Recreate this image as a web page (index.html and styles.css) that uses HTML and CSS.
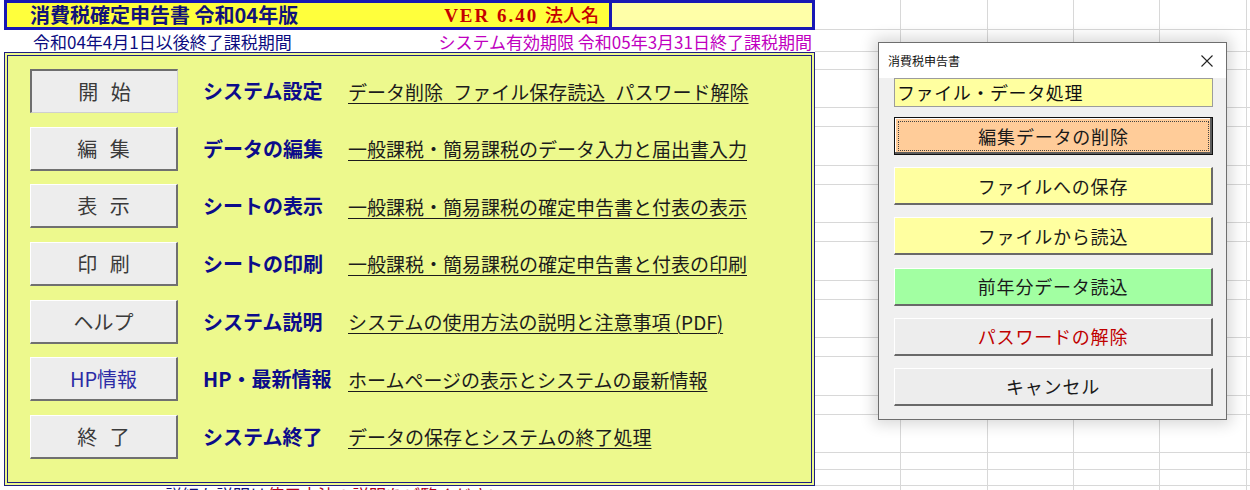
FILE: index.html
```html
<!DOCTYPE html>
<html lang="ja">
<head>
<meta charset="utf-8">
<title>消費税確定申告書</title>
<link rel="stylesheet" href="styles.css">
</head>
<body>
<div class="sheet">
  <div class="gutter"></div>
  <main class="main">
    <header class="title-row">
      <div class="title-cell">
        <span class="title">消費税確定申告書 令和04年版</span>
        <span class="version"><span class="ver-latin">VER 6.40 </span>法人名</span>
      </div>
      <div class="name-cell"></div>
    </header>
    <div class="sub-row">
      <span class="period">令和04年4月1日以後終了課税期間</span>
      <span class="expiry">システム有効期限 令和05年3月31日終了課税期間</span>
    </div>
    <section class="panel">
      <div class="menu">
        <button class="menu-btn pressed">開 始</button>
        <span class="menu-label">システム設定</span>
        <a class="menu-link spaced">データ削除 ファイル保存読込 パスワード解除</a>

        <button class="menu-btn">編 集</button>
        <span class="menu-label">データの編集</span>
        <a class="menu-link">一般課税・簡易課税のデータ入力と届出書入力</a>

        <button class="menu-btn">表 示</button>
        <span class="menu-label">シートの表示</span>
        <a class="menu-link">一般課税・簡易課税の確定申告書と付表の表示</a>

        <button class="menu-btn">印 刷</button>
        <span class="menu-label">シートの印刷</span>
        <a class="menu-link">一般課税・簡易課税の確定申告書と付表の印刷</a>

        <button class="menu-btn">ヘルプ</button>
        <span class="menu-label">システム説明</span>
        <a class="menu-link">システムの使用方法の説明と注意事項 (PDF)</a>

        <button class="menu-btn blue">HP情報</button>
        <span class="menu-label">HP・最新情報</span>
        <a class="menu-link">ホームページの表示とシステムの最新情報</a>

        <button class="menu-btn">終 了</button>
        <span class="menu-label">システム終了</span>
        <a class="menu-link">データの保存とシステムの終了処理</a>
      </div>
    </section>
    <div class="foot-row"><span class="foot-navy">詳細な説明は</span><span class="foot-red">使用方法の説明をご覧ください</span></div>
  </main>
  <div class="cells">
    <div class="r h30"></div>
    <div class="r h22"></div>
    <div class="r h18"></div>
    <div class="r h38"></div>
    <div class="r h19"></div>
    <div class="r h39"></div>
    <div class="r h19"></div>
    <div class="r h38"></div>
    <div class="r h19"></div>
    <div class="r h39"></div>
    <div class="r h19"></div>
    <div class="r h38"></div>
    <div class="r h19"></div>
    <div class="r h39"></div>
    <div class="r h19"></div>
    <div class="r h38"></div>
    <div class="r h17"></div>
    <div class="r h16"></div>
    <div class="r h19"></div>
  </div>

  <div class="dialog">
    <div class="dlg-title">
      <span>消費税申告書</span>
      <svg class="close" width="12" height="12" viewBox="0 0 12 12"><path d="M0.5 0.5 L11.5 11.5 M11.5 0.5 L0.5 11.5" stroke="#222" stroke-width="1.1" fill="none"/></svg>
    </div>
    <div class="dlg-body">
      <div class="dlg-label">ファイル・データ処理</div>
      <div class="dlg-buttons">
        <button class="dlg-btn peach focus">編集データの削除</button>
        <button class="dlg-btn yellow">ファイルへの保存</button>
        <button class="dlg-btn yellow">ファイルから読込</button>
        <button class="dlg-btn green">前年分データ読込</button>
        <button class="dlg-btn red-text">パスワードの解除</button>
        <button class="dlg-btn">キャンセル</button>
      </div>
    </div>
  </div>
</div>
</body>
</html>
```

FILE: styles.css
```css
* { box-sizing: border-box; }

html, body {
  margin: 0;
  padding: 0;
  background: #ffffff;
}

body {
  font-family: "Noto Sans CJK JP", "Noto Sans", sans-serif;
  color: #111;
}

.sheet {
  position: relative;
  display: flex;
  width: 1250px;
  height: 490px;
  overflow: hidden;
  background: #ffffff;
}

.gutter {
  width: 4px;
  flex: none;
}

.main {
  width: 811px;
  flex: none;
  display: flex;
  flex-direction: column;
}

.main > * { flex: none; }

/* header row */
.title-row {
  display: flex;
  height: 30px;
  border: 3px solid #1818b4;
}

.title-cell {
  width: 605px;
  flex: none;
  display: flex;
  align-items: center;
  justify-content: space-between;
  padding: 0 10px 0 23px;
  background: #ffff3c;
  border-right: 3px solid #1818b4;
}

.title {
  font-size: 20px;
  font-weight: 700;
  color: #12127a;
  line-height: 1;
  white-space: nowrap;
}

.version {
  font-family: "Noto Sans CJK JP", sans-serif;
  font-size: 18px;
  font-weight: 500;
  color: #c40000;
  line-height: 1;
  white-space: nowrap;
}

.ver-latin {
  font-family: "Liberation Serif", "Noto Sans CJK JP", serif;
  font-size: 19px;
  font-weight: 700;
  letter-spacing: 2px;
}

.name-cell {
  flex: 1;
  background: #ffffa8;
}

.sub-row {
  height: 22px;
  display: flex;
  align-items: center;
  justify-content: space-between;
  padding: 0 3px 0 29px;
  font-size: 17px;
  line-height: 1;
  white-space: nowrap;
}

.period { color: #0c0c80; }
.expiry { color: #c000c0; }

/* main panel */
.panel {
  height: 434px;
  border: 4px double #1e1e82;
  background: #edf98d;
  padding: 13px 0 0 22px;
}

.menu {
  display: grid;
  grid-template-columns: 148px 120px auto;
  grid-template-rows: repeat(7, 44px);
  column-gap: 25px;
  row-gap: 13.67px;
  align-items: center;
}

.menu-btn {
  width: 148px;
  height: 44px;
  padding: 0;
  margin: 0;
  font-family: "Noto Sans CJK JP", sans-serif;
  font-size: 20px;
  color: #3a3a3a;
  word-spacing: 8px;
  background: #ededed;
  border-style: solid;
  border-width: 1px 2px 2px 1px;
  border-color: #ffffff #707070 #707070 #ffffff;
}

.menu-btn.pressed {
  border-width: 2px 1px 1px 2px;
  border-color: #6e6e6e #cfcfcf #cfcfcf #6e6e6e;
}

.menu-btn.blue { color: #2b2ba6; }

.menu-label {
  font-size: 20px;
  font-weight: 700;
  color: #0c0c8a;
  white-space: nowrap;
  line-height: 1;
}

.menu-link {
  font-size: 19px;
  color: #1c1c1c;
  text-decoration: underline;
  text-decoration-thickness: 1px;
  text-underline-offset: 3px;
  white-space: nowrap;
  line-height: 1;
}

.menu-link.spaced { word-spacing: 6px; }

.foot-row {
  height: 17px;
  padding-left: 161px;
  font-size: 17px;
  line-height: 17px;
  white-space: nowrap;
}

.foot-navy { color: #10107a; }
.foot-red { color: #b00020; }

/* spreadsheet cells on the right */
.cells {
  flex: 1;
  display: flex;
  flex-direction: column;
  background-image:
    linear-gradient(#d8d8d8, #d8d8d8),
    linear-gradient(#d8d8d8, #d8d8d8),
    linear-gradient(#d8d8d8, #d8d8d8),
    linear-gradient(#d8d8d8, #d8d8d8),
    linear-gradient(#d8d8d8, #d8d8d8);
  background-size: 1px 100%;
  background-repeat: no-repeat;
  background-position: 85px 0, 172px 0, 258px 0, 344px 0, 431px 0;
}

.r {
  flex: none;
  border-bottom: 1px solid #d8d8d8;
}

.h16 { height: 16px; }
.h17 { height: 17px; }
.h18 { height: 18px; }
.h19 { height: 19px; }
.h22 { height: 22px; }
.h30 { height: 30px; }
.h38 { height: 38px; }
.h39 { height: 39px; }

/* floating dialog */
.dialog {
  position: absolute;
  left: 878px;
  top: 42px;
  width: 349px;
  height: 378px;
  border: 1px solid #6e6e6e;
  background: #f0f0f0;
  box-shadow: 0 0 14px 4px rgba(0, 0, 0, 0.16);
}

.dlg-title {
  height: 35px;
  display: flex;
  align-items: center;
  justify-content: space-between;
  padding: 0 13px 0 9px;
  background: #ffffff;
  font-size: 12px;
  color: #111;
}

.close { display: block; }

.dlg-body {
  padding: 0 13px 0 15px;
}

.dlg-label {
  height: 29px;
  background: #ffffa0;
  border: 1px solid #9c9c9c;
  padding-left: 2px;
  font-size: 18px;
  line-height: 26px;
  letter-spacing: 0.6px;
  color: #111;
  white-space: nowrap;
}

.dlg-buttons {
  margin-top: 10px;
  display: flex;
  flex-direction: column;
  gap: 12.2px;
}

.dlg-btn {
  width: 100%;
  height: 38px;
  padding: 0;
  margin: 0;
  font-family: "Noto Sans CJK JP", sans-serif;
  font-size: 18px;
  letter-spacing: 0.8px;
  color: #1a1a1a;
  background: #ededed;
  border-style: solid;
  border-width: 1px 2px 2px 1px;
  border-color: #ffffff #696969 #696969 #ffffff;
}

.dlg-btn.peach { background: #ffcc99; }
.dlg-btn.yellow { background: #ffffa0; }
.dlg-btn.green { background: #a2ffa2; }
.dlg-btn.red-text { color: #c00000; }

.dlg-btn.focus {
  border: 1px solid #111111;
  box-shadow: inset -2px -2px 0 #5c5c5c, inset 1px 1px 0 #ffffff;
  outline: 1px dotted #444444;
  outline-offset: -5px;
}
```
